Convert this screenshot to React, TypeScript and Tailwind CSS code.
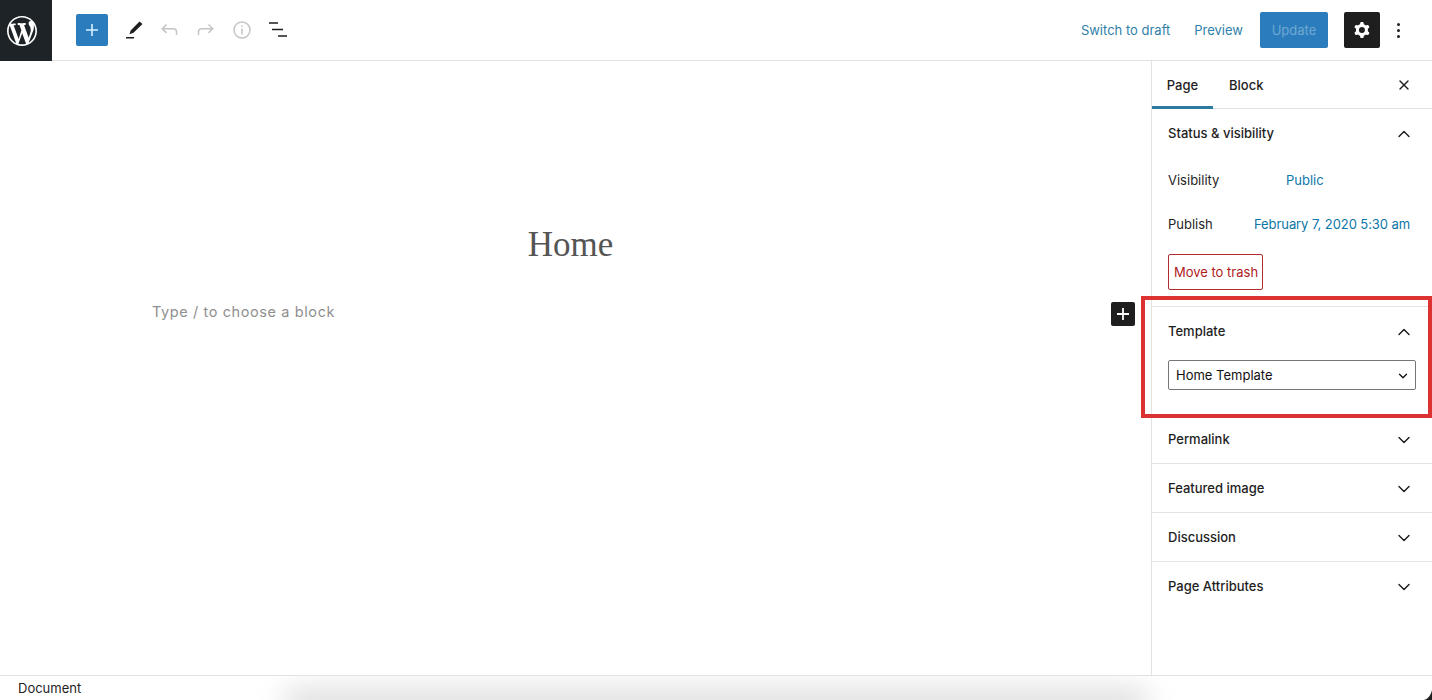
import { ChevronDown, ChevronUp, X } from 'lucide-react';

const WpLogo = () => (
  <svg width="30" height="30" viewBox="0 0 20 20" fill="#fff">
    <path d="M20 10c0-5.51-4.49-10-10-10C4.480 0 0 4.490 0 10c0 5.520 4.480 10 10 10 5.510 0 10-4.480 10-10zM7.780 15.370L4.370 6.220c.55-.02 1.170-.08 1.170-.08.5-.06.44-1.130-.06-1.110 0 0-1.450.11-2.370.11-.18 0-.37 0-.58-.01C4.120 2.690 6.890 1.030 10 1.030c2.320 0 4.430.89 6.020 2.350-.67-.11-1.630.39-1.630 1.560 0 .73.44 1.340.89 2.070.35.61.55 1.360.55 2.460 0 1.490-1.400 5-1.400 5l-3.030-8.370c.54-.02.82-.17.82-.17.5-.05.44-1.250-.06-1.220 0 0-1.440.12-2.380.12-.87 0-2.330-.12-2.330-.12-.5-.03-.560 1.200-.06 1.220l.92.080 1.260 3.410zM17.410 10c.24-.64.74-1.870.43-4.250.7 1.290 1.050 2.710 1.050 4.250 0 3.290-1.730 6.240-4.400 7.790.97-2.590 1.940-5.200 2.920-7.790zM6.100 18.090C3.120 16.650 1.110 13.530 1.110 10c0-1.300.23-2.480.72-3.590C3.250 10.300 4.670 14.200 6.100 18.090zm4.030-6.630l2.580 6.980c-.86.29-1.740.45-2.710.45-.82 0-1.620-.11-2.380-.34.85-2.490 1.670-4.750 2.510-7.090z" />
  </svg>
);

const ClosedPanel = ({ title, last }: { title: string; last?: boolean }) => (
  <div
    className={`h-[49px] pt-px flex items-center justify-between pl-4 pr-[18px] text-[13px] font-medium text-[#1e1e1e] ${
      last ? '' : 'border-b border-[#e4e4e4]'
    }`}
  >
    {title}
    <ChevronDown size={20} strokeWidth={1.7} />
  </div>
);

export default function App() {
  return (
    <div className="relative h-[700px] w-[1432px] overflow-hidden bg-white flex flex-col font-['Inter','Liberation_Sans',sans-serif]">
      <header className="h-[61px] shrink-0 flex items-center border-b border-[#e2e2e2]">
        <div className="w-[52px] h-[61px] bg-[#1e2327] flex items-center pl-[7px] -mb-px">
          <WpLogo />
        </div>
        <button className="ml-6 w-8 h-8 rounded-[2px] bg-[#2b7cbd] flex items-center justify-center">
          <svg width="16" height="16" viewBox="0 0 16 16" stroke="#d5efff" strokeWidth="1.6">
            <path d="M8 2v12M2 8h12" />
          </svg>
        </button>
        <svg className="ml-[16px]" width="20" height="24" viewBox="0 0 20 24" fill="#1e1e1e">
          <path d="M15.500 3.500l3 2.500-9 8.800-4 1.400 1.200-3.800z" />
          <rect x="2" y="19" width="8" height="1.500" />
        </svg>
        <svg className="ml-[16px]" width="18" height="24" viewBox="0 0 18 24" fill="none" stroke="#c4c4c4" strokeWidth="1.500">
          <path d="M16.500 17v-3c0-2-1.200-3.300-3.300-3.300H2.500M6.500 6.500l-4.200 4.200 4.200 4.200" />
        </svg>
        <svg className="ml-[19px]" width="18" height="24" viewBox="0 0 18 24" fill="none" stroke="#c4c4c4" strokeWidth="1.500">
          <path d="M1.500 17v-3c0-2 1.200-3.300 3.300-3.300h10.700M11.500 6.500l4.200 4.200-4.200 4.200" />
        </svg>
        <svg className="ml-[18px]" width="18" height="18" viewBox="0 0 18 18" fill="none" stroke="#c4c4c4" strokeWidth="1.500">
          <circle cx="9" cy="9" r="8" />
          <path d="M9 7.500v6M9 4.500v1.600" />
        </svg>
        <svg className="ml-[18px]" width="20" height="16" viewBox="0 0 20 16" stroke="#1e1e1e" strokeWidth="1.500">
          <path d="M0 1h9M3 7.500h11M9 14h9" />
        </svg>
        <div className="ml-auto flex items-center text-[13px] text-[#2f7fa8]">
          <span className="pt-[2px]">Switch to draft</span>
          <span className="ml-6 pt-[2px]">Preview</span>
          <button className="ml-[17px] w-[68px] h-9 pt-[2px] rounded-[2px] bg-[#2b7cbd] text-[#6fa9d2]">Update</button>
          <button className="ml-4 w-9 h-9 rounded-[2px] bg-[#1e1e1e] flex items-center justify-center">
            <svg width="24" height="24" viewBox="0 0 24 24" fill="#fff">
              <path
                fillRule="evenodd"
                d="M10.289 4.836A1 1 0 0111.275 4h1.306a1 1 0 01.987.836l.244 1.466c.787.26 1.503.679 2.108 1.218l1.393-.522a1 1 0 011.216.437l.653 1.130a1 1 0 01-.23 1.273l-1.148.944a6.025 6.025 0 010 2.435l1.149.946a1 1 0 01.23 1.272l-.653 1.130a1 1 0 01-1.216.437l-1.394-.522c-.605.540-1.320.958-2.108 1.218l-.244 1.466a1 1 0 01-.987.836h-1.306a1 1 0 01-.986-.836l-.244-1.466a5.995 5.995 0 01-2.108-1.218l-1.394.522a1 1 0 01-1.217-.436l-.653-1.131a1 1 0 01.23-1.272l1.149-.946a6.026 6.026 0 010-2.435l-1.148-.944a1 1 0 01-.23-1.272l.653-1.131a1 1 0 011.217-.437l1.393.522a5.994 5.994 0 012.108-1.218l.244-1.466zM14.929 12a3 3 0 11-6 0 3 3 0 016 0z"
              />
            </svg>
          </button>
          <span className="ml-[17px] mr-8 flex flex-col gap-[3px]">
            <i className="block w-[3px] h-[3px] rounded-full bg-[#1e1e1e]" />
            <i className="block w-[3px] h-[3px] rounded-full bg-[#1e1e1e]" />
            <i className="block w-[3px] h-[3px] rounded-full bg-[#1e1e1e]" />
          </span>
        </div>
      </header>

      <div className="flex-1 flex min-h-0">
        <main className="flex-1 min-w-0 relative pr-[10px]">
          <h1 className="mt-[164px] text-center text-[35px] leading-10 text-[#555] font-['Liberation_Serif',serif]">
            Home
          </h1>
          <p className="mt-[37px] ml-[152px] text-[14.5px] leading-5 tracking-[0.6px] text-[#8f8f8f] font-['Inter',sans-serif]">
            Type / to choose a block
          </p>
          <button className="absolute left-[1111px] top-[241px] w-6 h-6 rounded-[2px] bg-[#1e1e1e] flex items-center justify-center">
            <svg width="14" height="14" viewBox="0 0 14 14" stroke="#fff" strokeWidth="1.800">
              <path d="M7 1v12M1 7h12" />
            </svg>
          </button>
        </main>

        <aside className="w-[281px] shrink-0 border-l border-[#e2e2e2]">
          <div className="h-12 flex items-center border-b border-[#e2e2e2] text-[13px] font-medium text-[#1e1e1e]">
            <span className="w-[61px] h-[48px] flex items-center justify-center border-b-[3px] border-[#2b7a9f] pt-[5px]">Page</span>
            <span className="ml-[16px] pt-[3px]">Block</span>
            <X size={16} className="ml-auto mr-[20px]" />
          </div>

          <section className="h-[198px] border-b border-[#e4e4e4] pl-4 pr-[18px] text-[13px] text-[#1e1e1e]">
            <div className="flex items-center justify-between h-[49px] font-medium">
              Status &amp; visibility
              <ChevronUp size={20} strokeWidth={1.7} />
            </div>
            <div className="mt-[13px] flex items-center h-5">
              <span className="w-[118px]">Visibility</span>
              <span className="text-[#0b76a8]">Public</span>
            </div>
            <div className="mt-6 mr-1 flex items-center justify-between h-5">
              Publish
              <span className="text-[#0b76a8] tracking-[-0.08px]">February 7, 2020 5:30 am</span>
            </div>
            <button className="mt-[19px] h-9 w-[95px] pt-[2px] pl-px border border-[#b32d2e] rounded-[2px] text-[#b01b1c]">
              Move to trash
            </button>
          </section>

          <section className="h-[108px] border-b border-[#e4e4e4] px-4">
            <div className="flex items-center justify-between h-[49px] pr-[2px] text-[13px] font-medium text-[#1e1e1e]">
              Template
              <ChevronUp size={20} strokeWidth={1.7} />
            </div>
            <div className="mt-1 h-[30px] pt-[2px] border border-[#757575] rounded-[2px] flex items-center justify-between pl-[7px] pr-[5px] text-[13px] text-[#111]">
              Home Template
              <ChevronDown size={14} strokeWidth={2.2} />
            </div>
          </section>

          <ClosedPanel title="Permalink" />
          <ClosedPanel title="Featured image" />
          <ClosedPanel title="Discussion" />
          <ClosedPanel title="Page Attributes" last />
        </aside>
      </div>

      <footer className="h-[25px] shrink-0 border-t border-[#e2e2e2] flex items-center pt-[2px] pl-[18px] text-[13px] text-[#1e1e1e] relative overflow-hidden">
        <div className="absolute left-[285px] right-[285px] -bottom-4 h-7 bg-[#dedede] blur-[14px]" />
        <span className="relative">Document</span>
        <svg className="absolute right-0 bottom-0" width="8" height="10" viewBox="0 0 8 10" fill="#222">
          <path d="M8 0v10H0c4-1 7-5 8-10z" />
        </svg>
      </footer>

      <div className="absolute left-[1141px] top-[296px] w-[291px] h-[122px] border-4 border-[#dc3232] pointer-events-none" />
    </div>
  );
}
